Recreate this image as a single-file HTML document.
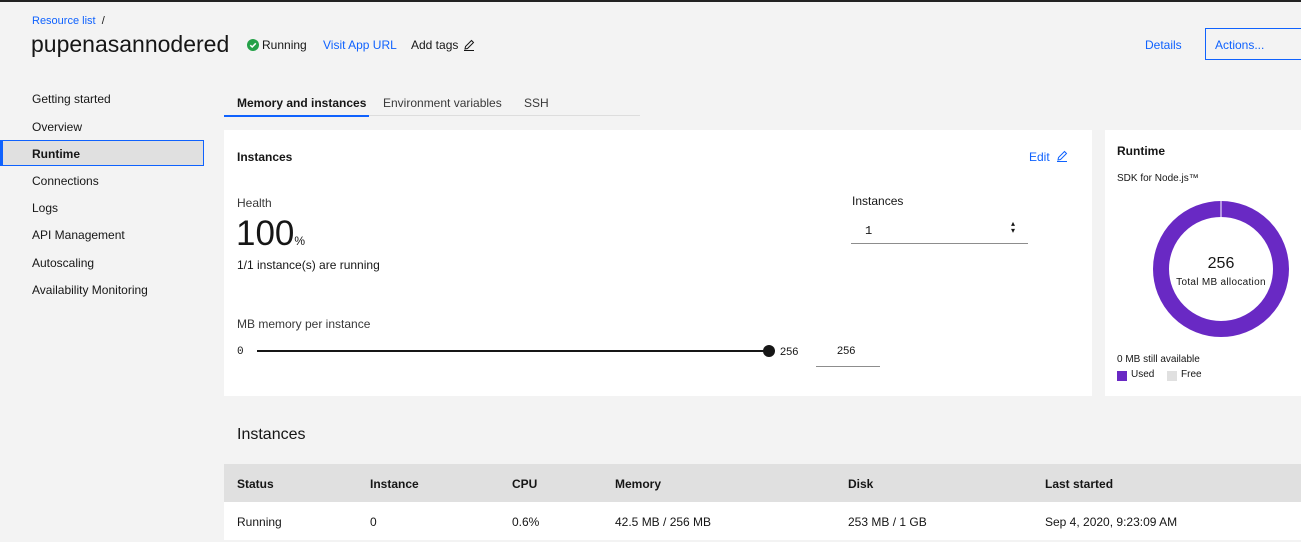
<!DOCTYPE html><html><head><style>
*{margin:0;padding:0;box-sizing:border-box}
body{width:1301px;height:542px;background:#f3f3f3;font-family:"Liberation Sans",sans-serif;color:#161616;position:relative;overflow:hidden;font-size:12px}
.a{position:absolute;white-space:nowrap}
.b{font-weight:bold}
.blue{color:#0f62fe}
</style></head><body>
<div class="a" style="left:0;top:0;width:1301px;height:2px;background:#222"></div>
<div class="a blue" style="left:32px;top:15px;font-size:11px">Resource list <span style="color:#161616">&nbsp;/</span></div>
<div class="a" style="left:31px;top:31px;font-size:23px">pupenasannodered</div>
<svg class="a" style="left:247px;top:39px" width="12" height="12"><circle cx="6" cy="6" r="6" fill="#24a148"/><path d="M3.3 6.2 L5.2 8 L8.8 4.3" fill="none" stroke="#fff" stroke-width="1.5"/></svg>
<div class="a" style="left:262px;top:38px">Running</div>
<div class="a blue" style="left:323px;top:38px">Visit App URL</div>
<div class="a" style="left:411px;top:38px">Add tags</div>
<svg class="a" style="left:463px;top:39px" width="12" height="12"><path d="M2 10 L2.5 7.5 L8.5 1.5 L10.5 3.5 L4.5 9.5 Z M1 11.5 H11" fill="none" stroke="#161616" stroke-width="1"/></svg>
<div class="a blue" style="left:1145px;top:38px">Details</div>
<div class="a" style="left:1205px;top:28px;width:100px;height:32px;border:1px solid #0f62fe"></div>
<div class="a blue" style="left:1215px;top:38px">Actions...</div>

<div class="a" style="left:32px;top:92px">Getting started</div>
<div class="a" style="left:32px;top:120px">Overview</div>
<div class="a" style="left:0;top:140px;width:204px;height:26px;background:#e0e0e0;border:1px solid #0f62fe;border-left:3px solid #0f62fe"></div>
<div class="a b" style="left:32px;top:147px">Runtime</div>
<div class="a" style="left:32px;top:174px">Connections</div>
<div class="a" style="left:32px;top:201px">Logs</div>
<div class="a" style="left:32px;top:228px">API Management</div>
<div class="a" style="left:32px;top:256px">Autoscaling</div>
<div class="a" style="left:32px;top:283px">Availability Monitoring</div>

<div class="a" style="left:224px;top:115px;width:416px;height:1px;background:#ddd"></div>
<div class="a" style="left:224px;top:115px;width:145px;height:2px;background:#0f62fe"></div>
<div class="a b" style="left:237px;top:96px">Memory and instances</div>
<div class="a" style="left:383px;top:96px;color:#393939">Environment variables</div>
<div class="a" style="left:524px;top:96px;color:#393939">SSH</div>

<div class="a" style="left:224px;top:130px;width:868px;height:266px;background:#fff"></div>
<div class="a b" style="left:237px;top:150px">Instances</div>
<div class="a blue" style="left:1029px;top:150px">Edit</div>
<svg class="a" style="left:1056px;top:150px" width="12" height="12"><path d="M2 10 L2.5 7.5 L8.5 1.5 L10.5 3.5 L4.5 9.5 Z M1 11.5 H11" fill="none" stroke="#0f62fe" stroke-width="1"/></svg>
<div class="a" style="left:237px;top:196px;color:#393939">Health</div>
<div class="a" style="left:236px;top:214px;font-size:35px;font-weight:300">100<span style="font-size:12px">%</span></div>
<div class="a" style="left:237px;top:258px">1/1 instance(s) are running</div>
<div class="a" style="left:852px;top:194px">Instances</div>
<div class="a" style="left:865px;top:224px;font-family:'Liberation Mono',monospace">1</div>
<div class="a" style="left:1011px;top:220px;font-size:8px;line-height:7px">▴<br>▾</div>
<div class="a" style="left:851px;top:243px;width:177px;height:1px;background:#8d8d8d"></div>
<div class="a" style="left:237px;top:317px;color:#393939">MB memory per instance</div>
<div class="a" style="left:237px;top:346px;font-family:'Liberation Mono',monospace;font-size:11px">0</div>
<div class="a" style="left:257px;top:350px;width:512px;height:2px;background:#161616"></div>
<div class="a" style="left:763px;top:345px;width:12px;height:12px;border-radius:50%;background:#161616"></div>
<div class="a" style="left:780px;top:346px;font-size:11px">256</div>
<div class="a" style="left:837px;top:345px;font-size:11px">256</div>
<div class="a" style="left:816px;top:366px;width:64px;height:1px;background:#8d8d8d"></div>

<div class="a" style="left:1105px;top:130px;width:200px;height:266px;background:#fff"></div>
<div class="a b" style="left:1117px;top:144px">Runtime</div>
<div class="a" style="left:1117px;top:173px;font-size:10px">SDK for Node.js™</div>
<svg class="a" style="left:1152px;top:200px" width="138" height="138"><circle cx="69" cy="69" r="60" fill="none" stroke="#6929c4" stroke-width="16"/><line x1="69" y1="1" x2="69" y2="17" stroke="#fff" stroke-width="1"/></svg>
<div class="a" style="left:1152px;top:255px;width:138px;text-align:center;font-size:16px">256</div>
<div class="a" style="left:1152px;top:277px;width:138px;text-align:center;font-size:10px;letter-spacing:0.3px">Total MB allocation</div>
<div class="a" style="left:1117px;top:354px;font-size:10px">0 MB still available</div>
<div class="a" style="left:1117px;top:371px;width:10px;height:10px;background:#6929c4"></div>
<div class="a" style="left:1131px;top:369px;font-size:10px">Used</div>
<div class="a" style="left:1167px;top:371px;width:10px;height:10px;background:#e0e0e0"></div>
<div class="a" style="left:1181px;top:369px;font-size:10px">Free</div>

<div class="a" style="left:237px;top:426px;font-size:16px">Instances</div>
<div class="a" style="left:224px;top:464px;width:1077px;height:38px;background:#e0e0e0"></div>
<div class="a" style="left:224px;top:502px;width:1077px;height:38px;background:#fff"></div>
<div class="a b" style="left:237px;top:477px">Status</div>
<div class="a b" style="left:370px;top:477px">Instance</div>
<div class="a b" style="left:512px;top:477px">CPU</div>
<div class="a b" style="left:615px;top:477px">Memory</div>
<div class="a b" style="left:848px;top:477px">Disk</div>
<div class="a b" style="left:1045px;top:477px">Last started</div>
<div class="a" style="left:237px;top:515px">Running</div>
<div class="a" style="left:370px;top:515px">0</div>
<div class="a" style="left:512px;top:515px">0.6%</div>
<div class="a" style="left:615px;top:515px">42.5 MB / 256 MB</div>
<div class="a" style="left:848px;top:515px">253 MB / 1 GB</div>
<div class="a" style="left:1045px;top:515px">Sep 4, 2020, 9:23:09 AM</div>
</body></html>
